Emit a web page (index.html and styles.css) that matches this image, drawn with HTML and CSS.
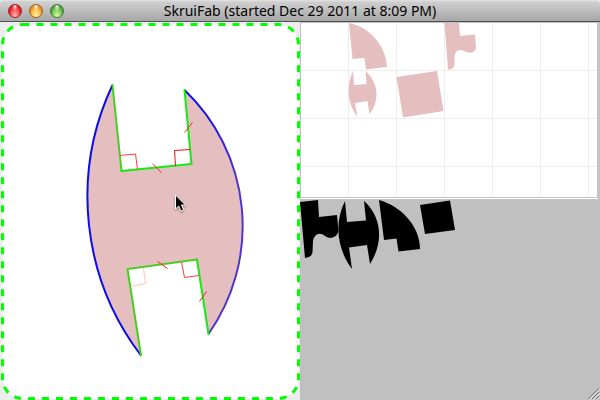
FILE: index.html
```
<!DOCTYPE html>
<html lang="en">
<head>
<meta charset="utf-8">
<title>SkruiFab</title>
<link rel="stylesheet" href="styles.css">
</head>
<body>
<div class="window">
  <header class="titlebar">
    <div class="lights">
      <button class="light close" aria-label="Close"></button>
      <button class="light minimize" aria-label="Minimize"></button>
      <button class="light zoom" aria-label="Zoom"></button>
    </div>
    <h1 class="title">SkruiFab (started Dec 29 2011 at 8:09 PM)</h1>
  </header>
  <main class="workspace">
    <section class="sketch" aria-label="Sketch">
      <svg class="canvas" aria-hidden="true">
        <defs>
          <linearGradient id="fade" x1="0" y1="0" x2="0" y2="1">
            <stop offset="0" stop-color="#0c0ce8"/>
            <stop offset="0.35" stop-color="#5135c4"/>
          </linearGradient>
        </defs>
        <rect class="sheet" x="2.5" y="2.5" rx="20"/>
        <g transform="translate(0 -22)">
          <path class="part" d="M112.5 85L121.5 171L191.5 164L184.5 90A188 188 0 0 1 208.5 334L197 259.5L127.5 269L141 355.5A262 262 0 0 1 112.5 85Z"/>
          <g class="arcs">
            <path class="arc" d="M141 355.5A262 262 0 0 1 112.5 85"/>
            <path class="arc dim" d="M184.5 90A188 188 0 0 1 208.5 334"/>
          </g>
          <g class="edges">
            <path class="soft" d="M112.5 85L121.5 171"/>
            <path d="M121.5 171L191.5 164"/>
            <path d="M191.5 164L184.5 90"/>
            <path d="M208.5 334L197 259.5"/>
            <path class="soft" d="M197 259.5L127.5 269L141 355.5"/>
          </g>
          <g class="marks">
            <path d="M120 155.5L135.5 154L137.5 169.5"/>
            <path class="strong" d="M190 149.5L174.5 150.5L175.5 166"/>
            <path d="M181.5 262L184.5 277.5L199 275.5"/>
            <path class="faint" d="M143.5 268L145.5 283.5L131 286.5"/>
            <path class="tick" d="M184.5 132.5L192.5 122.5M152.5 164L161.5 172.5M157.5 261.5L167.5 268.5M199.5 301.5L206.5 291.5"/>
          </g>
          <path class="cursor" d="M175.5 195L175.5 209L178.7 206L181 211.2L183.6 210L181.5 205L185.5 205Z"/>
        </g>
      </svg>
    </section>
    <div class="outputs">
      <section class="layout" aria-label="Layout grid">
        <svg class="canvas" aria-hidden="true">
          <g class="pink" transform="translate(-301 -23)">
            <path d="M349 23C370 27 386 46 387 67L366 69.5L364.5 58L352.5 59Z"/>
            <path d="M444.5 23L459 23L460 36L475 34.5L476 48C475 53 470 54 464 51C459 48 454 52 454.5 58L454.5 65C453 69 451 69.5 448 69.5Z"/>
            <path d="M353 71L354 85L366.5 84L365.5 71C380 84 379 102 369.5 114L367.5 101L355 103L357.5 117C347 103 346 86 353 71Z"/>
            <path d="M396.5 77L437 71L443.5 111L403 117.5Z"/>
          </g>
        </svg>
      </section>
      <section class="cutouts" aria-label="Cut parts">
        <svg class="canvas" aria-hidden="true">
          <g transform="translate(-300 -200)">
            <path d="M300 202L318 200L319 217L337 215L338.5 231C337 237 331 240 325 236C319 231 314 235 313 241L312.5 252C312 256 309 257.5 305 258Z"/>
            <path d="M345 201L347 222L366 220.5L364 201C383 218 383 244 370 264L367 245L349 247.5L352 269C337 249 334 223 345 201Z"/>
            <path d="M379 200C401 206 420 226 420 249L398.5 251.5L396.5 238.5L384 240Z"/>
            <path d="M420 205L450 200.5L455 230L425 234Z"/>
          </g>
        </svg>
        <svg class="grip" viewBox="0 0 12 12" aria-hidden="true">
          <path class="groove" d="M0 11L11 0M4 11L11 4M8 11L11 8"/>
          <path class="shine" d="M1.5 11.5L11.5 1.5M5.5 11.5L11.5 5.5M9.5 11.5L11.5 9.5"/>
        </svg>
      </section>
    </div>
  </main>
</div>
</body>
</html>
```
FILE: styles.css
```
* {
  box-sizing: border-box;
}

body {
  margin: 0;
  background: #fff;
}

.window {
  display: flex;
  flex-direction: column;
  height: 100vh;
  background: #ededed;
}

.titlebar {
  display: grid;
  grid-template-columns: 1fr auto 1fr;
  align-items: center;
  height: 22px;
  background: linear-gradient(#e4e4e4, #cfcfcf 2px, #a7a7a7);
  border-bottom: 1px solid #515151;
  border-radius: 4px 4px 0 0;
}

.lights {
  display: flex;
  gap: 7px;
  padding-left: 8px;
}

.light {
  width: 14px;
  height: 14px;
  padding: 0;
  border: 1px solid;
  border-radius: 50%;
}

.close {
  border-color: #922;
  background: radial-gradient(ellipse at 50% 12%, #fff 0, #ffffff00 28%), radial-gradient(ellipse at 50% 95%, #ffc4c4, #f55 45%, #d61b25 75%);
}

.minimize {
  border-color: #a85f1d;
  background: radial-gradient(ellipse at 50% 12%, #fff 0, #ffffff00 28%), radial-gradient(ellipse at 50% 95%, #fff4a0, #ffc65a 45%, #e28720 75%);
}

.zoom {
  border-color: #3b7a2c;
  background: radial-gradient(ellipse at 50% 12%, #fff 0, #ffffff00 28%), radial-gradient(ellipse at 50% 95%, #d5ffb0, #8bd068 45%, #4a9c38 75%);
}

.title {
  margin: 0;
  color: #000;
  font: 14px/20px "Noto Sans", "Open Sans", sans-serif;
  white-space: nowrap;
}

.workspace {
  display: grid;
  grid-template-columns: 1fr 1fr;
  flex: 1;
  min-height: 0;
}

.sketch {
  min-width: 0;
}

.canvas {
  display: block;
  width: 100%;
  height: 100%;
}

.sheet {
  width: calc(100% - 4px);
  height: calc(100% - 4px);
  fill: #fff;
  stroke: #0f0;
  stroke-width: 3px;
  stroke-dasharray: 7 7;
}

.part,
.pink {
  fill: #e5bfc0;
}

.arcs,
.edges,
.marks {
  fill: none;
}

.arc {
  stroke: #0c0ce8;
  stroke-width: 2px;
}

.dim {
  stroke: url(#fade);
}

.edges {
  stroke: #12ec12;
  stroke-width: 2px;
  stroke-linecap: round;
}

.soft {
  stroke: #4bcc25;
}

.marks {
  stroke: #fa3c40;
  stroke-width: 1px;
}

.strong {
  stroke: #f00a10;
}

.tick {
  stroke: #ff2020;
}

.faint {
  stroke: #ffc4c4;
}

.cursor {
  fill: #000;
  stroke: #fff;
  stroke-width: 1px;
  filter: drop-shadow(0 1px 1px #0006);
}

.outputs {
  display: grid;
  grid-template-rows: 178fr 200fr;
  min-width: 0;
  min-height: 0;
}

.layout {
  min-height: 0;
  border: 1px solid #c0c0c0;
  border-right: 3px solid #c4c4c4;
  border-bottom: 3px double #c4c4c4;
  background:
    linear-gradient(90deg, #eee 1px, transparent 1px) 47px 0 / 48px 48px padding-box,
    linear-gradient(#eee 1px, transparent 1px) 0 47px / 48px 48px padding-box,
    #fff;
}

.cutouts {
  position: relative;
  min-height: 0;
  background: #c0c0c0;
}

.grip {
  position: absolute;
  right: 0;
  bottom: 0;
  width: 12px;
  height: 12px;
}

.groove {
  stroke: #777;
}

.shine {
  stroke: #e2e2e2;
}
```
